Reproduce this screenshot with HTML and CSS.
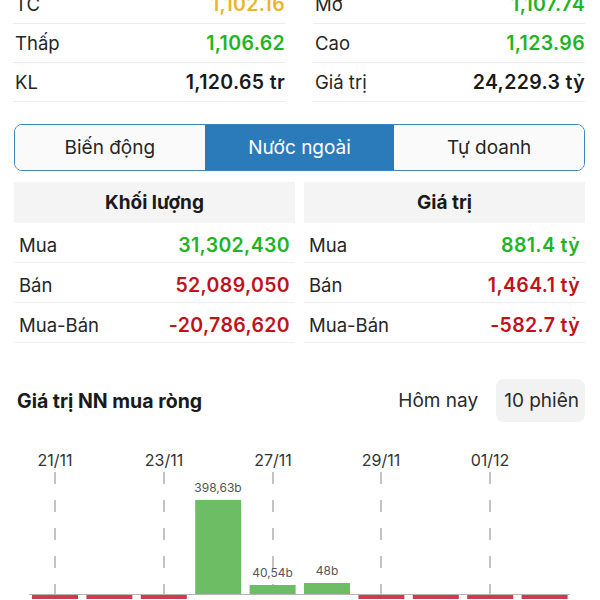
FILE: index.html
```html
<!DOCTYPE html>
<html lang="vi">
    <head>
        <meta charset="UTF-8">
        <meta name="viewport" content="width=device-width, initial-scale=1.0">
        <title>Chỉ số</title>
        <link rel="stylesheet" href="styles.css">
    </head>
    <body>
        <!-- thông tin chỉ số -->
        <div class="stats">
            <div class="stat-col">
                <div class="stat-row"><span class="label">TC</span><span class="value ref">1,102.16</span></div>
                <div class="stat-row"><span class="label">Thấp</span><span class="value up">1,106.62</span></div>
                <div class="stat-row"><span class="label">KL</span><span class="value strong">1,120.65 tr</span></div>
            </div>
            <div class="stat-col">
                <div class="stat-row"><span class="label">Mở</span><span class="value up">1,107.74</span></div>
                <div class="stat-row"><span class="label">Cao</span><span class="value up">1,123.96</span></div>
                <div class="stat-row"><span class="label">Giá trị</span><span class="value strong">24,229.3 tỷ</span></div>
            </div>
        </div>

        <!-- tab -->
        <div class="tabs">
            <div class="tab">Biến động</div>
            <div class="tab active">Nước ngoài</div>
            <div class="tab">Tự doanh</div>
        </div>

        <!-- bảng mua bán -->
        <div class="trade">
            <div class="trade-col">
                <div class="trade-head">Khối lượng</div>
                <div class="trade-row"><span class="label">Mua</span><span class="value up">31,302,430</span></div>
                <div class="trade-row"><span class="label">Bán</span><span class="value down">52,089,050</span></div>
                <div class="trade-row"><span class="label">Mua-Bán</span><span class="value down">-20,786,620</span></div>
            </div>
            <div class="trade-col">
                <div class="trade-head">Giá trị</div>
                <div class="trade-row"><span class="label">Mua</span><span class="value up">881.4 tỷ</span></div>
                <div class="trade-row"><span class="label">Bán</span><span class="value down">1,464.1 tỷ</span></div>
                <div class="trade-row"><span class="label">Mua-Bán</span><span class="value down">-582.7 tỷ</span></div>
            </div>
        </div>

        <!-- biểu đồ -->
        <div class="section-head">
            <div class="section-title">Giá trị NN mua ròng</div>
            <div class="filter">
                <span class="filter-item">Hôm nay</span>
                <span class="filter-item selected">10 phiên</span>
            </div>
        </div>

        <svg class="chart" width="600" height="160" viewBox="0 0 600 160">
            <g class="dates">
                <text x="55" y="27">21/11</text>
                <text x="164" y="27">23/11</text>
                <text x="273" y="27">27/11</text>
                <text x="381" y="27">29/11</text>
                <text x="490" y="27">01/12</text>
            </g>
            <g class="grid">
                <line x1="55" y1="33" x2="55" y2="156"/>
                <line x1="164" y1="33" x2="164" y2="156"/>
                <line x1="273" y1="33" x2="273" y2="156"/>
                <line x1="381" y1="33" x2="381" y2="156"/>
                <line x1="490" y1="33" x2="490" y2="156"/>
            </g>
            <g class="bars-sell">
                <rect x="32" y="156" width="46" height="20"/>
                <rect x="86.4" y="156" width="46" height="20"/>
                <rect x="140.8" y="156" width="46" height="20"/>
                <rect x="358.4" y="156" width="46" height="20"/>
                <rect x="412.8" y="156" width="46" height="20"/>
                <rect x="467.2" y="156" width="46" height="20"/>
                <rect x="521.6" y="156" width="46" height="20"/>
            </g>
            <g class="bars-buy">
                <rect x="195.2" y="61" width="46" height="95"/>
                <rect x="249.6" y="146" width="46" height="10"/>
                <rect x="304" y="144" width="46" height="12"/>
            </g>
            <line class="axis" x1="29" y1="155.5" x2="570" y2="155.5"/>
            <g class="bar-labels">
                <text x="218" y="53">398,63b</text>
                <text x="272.6" y="138">40,54b</text>
                <text x="327" y="136">48b</text>
            </g>
        </svg>
    </body>
</html>
```

FILE: styles.css
```css
*{
    margin: 0;
    padding: 0;
    box-sizing: border-box;
}
body{
    width: 600px;
    height: 600px;
    overflow: hidden;
    background-color: #fff;
    font-family: Inter, "Noto Sans", sans-serif;
    color: #222;
}
.stats{
    display: flex;
    gap: 28px;
    padding: 0 15px 0 13px;
    margin-top: -15px;
}
.stat-col{
    flex: 1;
}
.stat-row{
    height: 39px;
    display: flex;
    align-items: center;
    justify-content: space-between;
    padding-left: 2px;
    border-bottom: 1px solid #ececec;
    font-size: 18.5px;
}
.label{
    font-weight: 400;
    color: #262626;
}
.value{
    font-size: 19.5px;
    font-weight: 600;
    letter-spacing: 0.35px;
}
.ref{
    color: #ecb526;
}
.up{
    color: #1fb423;
}
.down{
    color: #c1121c;
}
.strong{
    color: #1a1a1a;
}
/* tab */
.tabs{
    display: flex;
    margin: 22px 15px 0 14px;
    height: 47px;
    border: 1.5px solid #3f84b8;
    border-radius: 8px;
    overflow: hidden;
}
.tab{
    flex: 1;
    display: flex;
    align-items: center;
    justify-content: center;
    font-size: 19px;
    color: #262626;
    background-color: #fafafa;
}
.tab.active{
    background-color: #2b7bbb;
    color: #fff;
}
/* bảng */
.trade{
    display: flex;
    gap: 9px;
    margin: 11px 15px 0 14px;
}
.trade-col{
    flex: 1;
}
.trade-head{
    height: 41px;
    display: flex;
    align-items: center;
    justify-content: center;
    background-color: #f4f4f4;
    font-size: 19px;
    font-weight: 700;
    color: #1a1a1a;
}
.trade-row{
    height: 40px;
    display: flex;
    align-items: center;
    justify-content: space-between;
    padding: 4px 5px 0 5px;
    border-bottom: 1px solid #efefef;
    font-size: 18.5px;
}
/* tiêu đề biểu đồ */
.section-head{
    display: flex;
    align-items: center;
    justify-content: space-between;
    margin: 36px 15px 0 17px;
}
.section-title{
    font-size: 19.5px;
    font-weight: 700;
    color: #1a1a1a;
}
.filter{
    display: flex;
    align-items: center;
    gap: 12px;
}
.filter-item{
    height: 43px;
    display: flex;
    align-items: center;
    padding: 0 6px 0 8px;
    font-size: 19px;
    color: #2a2a2a;
    border-radius: 8px;
}
.filter-item.selected{
    background-color: #f2f2f2;
}
.chart{
    display: block;
    margin-top: 17px;
}
.dates text{
    font-family: Inter, sans-serif;
    font-size: 16px;
    fill: #333;
    text-anchor: middle;
}
.grid line{
    stroke: #b0b0b0;
    stroke-width: 1.5;
    stroke-dasharray: 12 16;
}
.axis{
    stroke: #b5b5b5;
    stroke-width: 1;
}
.bars-buy rect{
    fill: #6cbd64;
}
.bars-sell rect{
    fill: #d3394c;
}
.bar-labels text{
    font-family: Inter, sans-serif;
    font-size: 12px;
    fill: #555;
    text-anchor: middle;
}
```
